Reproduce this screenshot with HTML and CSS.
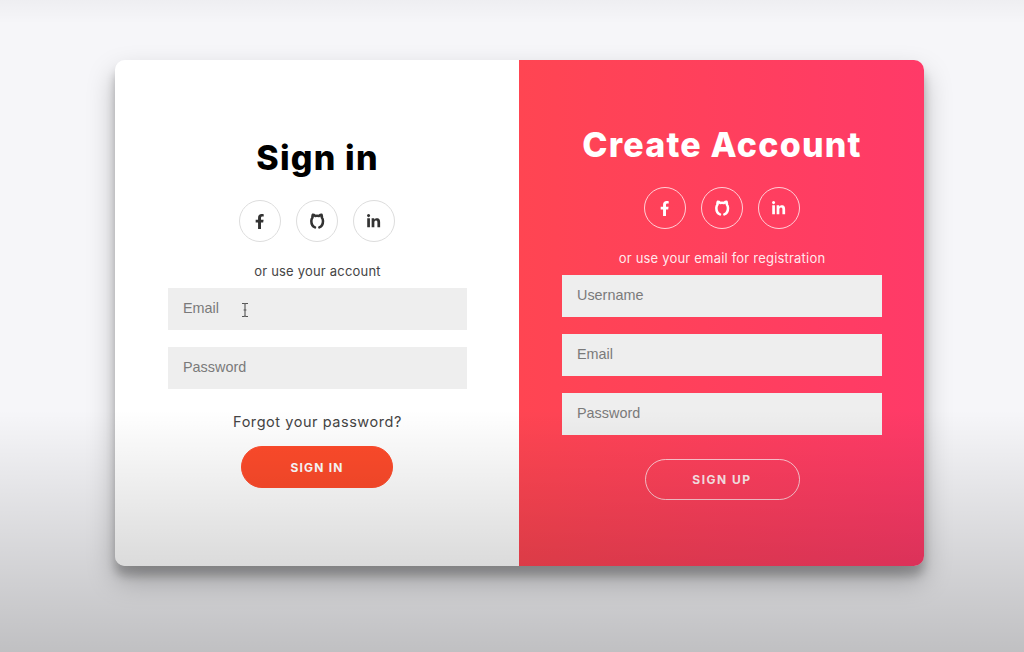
FILE: index.html
```html
<!DOCTYPE html>
<html lang="en">
<head>
    <meta charset="UTF-8">
    <meta name="viewport" content="width=device-width, initial-scale=1.0">
    <title>Sign in / Create Account</title>
    <link rel="stylesheet" href="styles.css">
</head>
<body>
    <div class="card">
        <form class="panel panel-signin">
            <h1>Sign in</h1>
            <div class="social">
                <a href="#" class="social-link">
                    <svg class="icon" viewBox="0 0 320 512"><path d="M279.14 288l14.22-92.66h-88.91v-60.13c0-25.35 12.42-50.06 52.24-50.06h40.42V6.26S260.43 0 225.36 0c-73.22 0-121.08 44.38-121.08 124.72v70.62H22.89V288h81.39v224h100.17V288z"/></svg>
                </a>
                <a href="#" class="social-link">
                    <svg class="icon icon-stroke" viewBox="0 0 24 24"><path d="M15.5 21.5c3.6-1.3 5.5-5 5.5-9.5 0-2-.6-3.8-1.8-5.2.3-1.2.2-2.8-.3-4 0 0-1.6-.2-4 1.6a12 12 0 0 0-5.8 0C7.2 2.6 5.6 2.8 5.6 2.8c-.5 1.2-.6 2.8-.3 4C4.1 8.2 3.5 10 3.5 12c0 4.5 1.9 8.2 5.5 9.5"/></svg>
                </a>
                <a href="#" class="social-link">
                    <svg class="icon" viewBox="0 0 448 512"><path d="M100.28 448H7.4V148.9h92.88zM53.79 108.1C24.09 108.1 0 83.5 0 53.8a53.79 53.79 0 0 1 107.58 0c0 29.7-24.1 54.3-53.79 54.3zM447.9 448h-92.68V302.4c0-34.7-.7-79.2-48.29-79.2-48.29 0-55.69 37.7-55.69 76.7V448h-92.78V148.9h89.08v40.8h1.3c12.4-23.5 42.69-48.3 87.88-48.3 94 0 111.28 61.9 111.28 142.3V448z"/></svg>
                </a>
            </div>
            <span class="hint">or use your account</span>
            <div class="field">
                <input type="email" placeholder="Email">
                <svg class="cursor" viewBox="0 0 8 14"><path d="M1 .5h2.2L4 1.3 4.8.5H7M4 1.3v11.4M1 13.5h2.2l.8-.8.8.8H7M2.6 7h2.8"/></svg>
            </div>
            <input type="password" placeholder="Password">
            <a href="#" class="forgot">Forgot your password?</a>
            <button type="button" class="btn btn-solid">Sign In</button>
        </form>

        <form class="panel panel-signup">
            <h1>Create Account</h1>
            <div class="social">
                <a href="#" class="social-link">
                    <svg class="icon" viewBox="0 0 320 512"><path d="M279.14 288l14.22-92.66h-88.91v-60.13c0-25.35 12.42-50.06 52.24-50.06h40.42V6.26S260.43 0 225.36 0c-73.22 0-121.08 44.38-121.08 124.72v70.62H22.89V288h81.39v224h100.17V288z"/></svg>
                </a>
                <a href="#" class="social-link">
                    <svg class="icon icon-stroke" viewBox="0 0 24 24"><path d="M15.5 21.5c3.6-1.3 5.5-5 5.5-9.5 0-2-.6-3.8-1.8-5.2.3-1.2.2-2.8-.3-4 0 0-1.6-.2-4 1.6a12 12 0 0 0-5.8 0C7.2 2.6 5.6 2.8 5.6 2.8c-.5 1.2-.6 2.8-.3 4C4.1 8.2 3.5 10 3.5 12c0 4.5 1.9 8.2 5.5 9.5"/></svg>
                </a>
                <a href="#" class="social-link">
                    <svg class="icon" viewBox="0 0 448 512"><path d="M100.28 448H7.4V148.9h92.88zM53.79 108.1C24.09 108.1 0 83.5 0 53.8a53.79 53.79 0 0 1 107.58 0c0 29.7-24.1 54.3-53.79 54.3zM447.9 448h-92.68V302.4c0-34.7-.7-79.2-48.29-79.2-48.29 0-55.69 37.7-55.69 76.7V448h-92.78V148.9h89.08v40.8h1.3c12.4-23.5 42.69-48.3 87.88-48.3 94 0 111.28 61.9 111.28 142.3V448z"/></svg>
                </a>
            </div>
            <span class="hint">or use your email for registration</span>
            <input type="text" placeholder="Username">
            <input type="email" placeholder="Email">
            <input type="password" placeholder="Password">
            <button type="button" class="btn btn-ghost">Sign Up</button>
        </form>
    </div>
</body>
</html>
```

FILE: styles.css
```css
* {
    box-sizing: border-box;
}

html, body {
    height: 100%;
}

body {
    margin: 0;
    overflow: hidden;
    background-color: #f6f6f9;
    font-family: Inter, "Open Sans", sans-serif;
    padding: 60px 100px 0 115px;
}

/* video player shade over the whole frame */
body::after {
    content: "";
    position: absolute;
    left: 0;
    right: 0;
    top: 410px;
    bottom: 0;
    background: linear-gradient(to bottom, rgba(0, 0, 0, 0), rgba(0, 0, 0, 0.22));
    pointer-events: none;
}

body::before {
    content: "";
    position: absolute;
    left: 0;
    right: 0;
    top: 0;
    height: 24px;
    background: linear-gradient(to bottom, rgba(0, 0, 0, 0.03), rgba(0, 0, 0, 0));
    pointer-events: none;
}

.card {
    display: flex;
    width: 809px;
    height: 506px;
    border-radius: 10px;
    overflow: hidden;
    box-shadow: 0 14px 28px rgba(0, 0, 0, 0.25), 0 10px 10px rgba(0, 0, 0, 0.22);
}

.panel {
    display: flex;
    flex-direction: column;
    align-items: center;
    justify-content: center;
}

.panel-signin {
    width: 404px;
    background-color: #fff;
    padding: 0 52px 0 53px;
    color: #444;
}

.panel-signup {
    flex: 1;
    background: linear-gradient(to right, #ff4552, #ff3a68);
    padding: 0 42px 0 43px;
    color: #fff;
}

h1 {
    margin: 0;
    font-size: 34px;
    font-weight: 800;
    line-height: 40px;
    letter-spacing: 1.2px;
    color: #000;
}

.panel-signup h1 {
    color: #fff;
}

.social {
    display: flex;
    gap: 15px;
    margin: 22px 0 20px;
}

.panel-signin .social {
    margin-right: 1px;
}

.social-link {
    width: 42px;
    height: 42px;
    display: flex;
    align-items: center;
    justify-content: center;
    border: 1px solid #ddd;
    border-radius: 50%;
    color: #333;
}

.panel-signup .social-link {
    border-color: rgba(255, 255, 255, 0.75);
    color: #fff;
}

.icon {
    height: 15px;
    fill: currentColor;
}

.icon-stroke {
    height: 16px;
    fill: none;
    stroke: currentColor;
    stroke-width: 3.8;
    stroke-linecap: round;
    stroke-linejoin: round;
}

.hint {
    font-size: 13px;
    line-height: 18px;
    margin-bottom: 8px;
    letter-spacing: 0.2px;
}

.panel-signup .hint {
    color: rgba(255, 255, 255, 0.9);
}

.field {
    position: relative;
    width: 100%;
}

input {
    display: block;
    width: 100%;
    height: 42px;
    padding: 0 15px 2px;
    margin: 0 0 17px;
    border: none;
    border-radius: 0;
    background-color: #eee;
    font-family: "Liberation Sans", sans-serif;
    font-size: 14.4px;
}

input::placeholder {
    color: #7a7a7a;
}

.cursor {
    position: absolute;
    left: 73px;
    top: 15px;
    width: 8px;
    height: 14px;
    fill: none;
    stroke: #555;
    stroke-width: 1.1;
}

.forgot {
    margin: 7px 0 15px;
    font-size: 14.5px;
    line-height: 18px;
    color: #444;
    text-decoration: none;
    letter-spacing: 0.55px;
}

.btn {
    border-radius: 21px;
    font-family: Inter, sans-serif;
    font-size: 12px;
    font-weight: 700;
    letter-spacing: 1.2px;
    text-transform: uppercase;
    color: #fff;
    cursor: pointer;
}

.btn-solid {
    width: 152px;
    height: 42px;
    margin-right: 1px;
    border: 1px solid #ff4b2b;
    background-color: #ff4b2b;
}

.btn-ghost {
    width: 155px;
    height: 41px;
    margin: 7px 0 1px;
    border: 1px solid rgba(255, 255, 255, 0.7);
    background-color: transparent;
    letter-spacing: 1.5px;
    color: rgba(255, 255, 255, 0.9);
}
```
